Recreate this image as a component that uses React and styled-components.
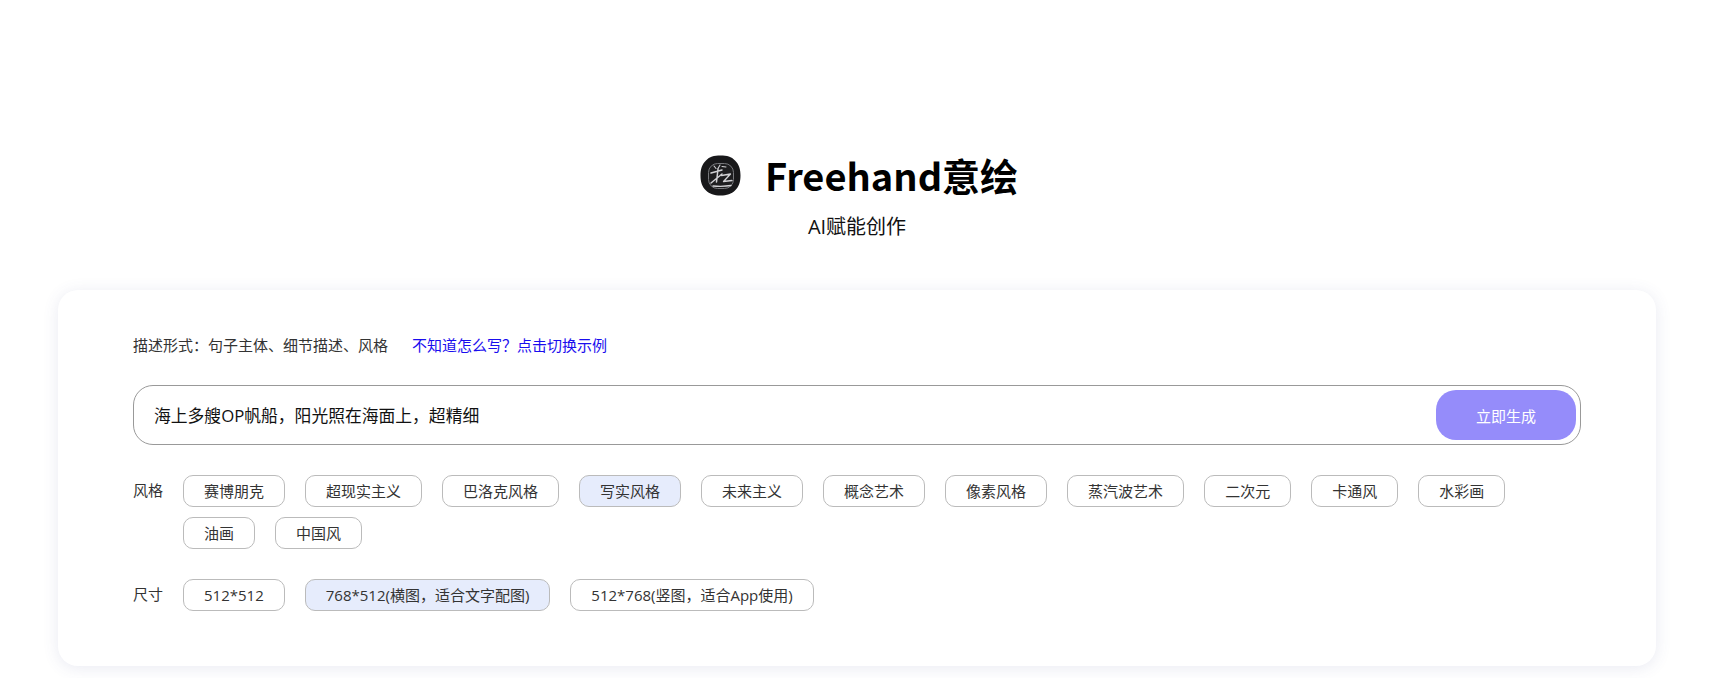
import React from 'react';
import styled, { createGlobalStyle } from 'styled-components';

const GlobalStyle = createGlobalStyle`
    html, body {
        margin: 0;
        background: #fff;
        font-family: "Open Sans", "Noto Sans CJK SC", sans-serif;
    }
`;

const Page = styled.div`
    height: 678px;
    overflow: hidden;
    padding: 155px 53px 0 58px;
    box-sizing: border-box;
`;

const Header = styled.header`
    display: flex;
    flex-direction: column;
    align-items: center;
`;

const TitleRow = styled.div`
    display: flex;
    align-items: center;
    gap: 24px;
    height: 41px;
    padding-left: 4px;
`;

const Title = styled.h1`
    margin: 0 0 3px;
    font-size: 38px;
    font-weight: 700;
    line-height: 41px;
    color: #000;
    font-family: "Noto Sans CJK SC", sans-serif;
`;

const Subtitle = styled.div`
    margin-top: 17px;
    font-size: 20px;
    line-height: 28px;
    color: #111;
`;

const Card = styled.section`
    margin-top: 49px;
    height: 376px;
    box-sizing: border-box;
    padding: 44px 75px 0;
    background: #fff;
    border-radius: 20px;
    box-shadow: 0 2px 16px rgba(70, 80, 150, 0.12);
`;

const HintRow = styled.div`
    display: flex;
    gap: 24px;
    font-size: 15px;
    line-height: 22px;
    color: #333;
`;

const HintLink = styled.a`
    color: #1a0dee;
    cursor: pointer;
`;

const SearchBar = styled.div`
    margin-top: 29px;
    height: 60px;
    box-sizing: border-box;
    display: flex;
    align-items: center;
    justify-content: space-between;
    padding: 0 4px 0 20px;
    border: 1px solid #999;
    border-radius: 20px;
`;

const PromptText = styled.div`
    font-size: 16.800px;
    color: #111;
`;

const GenerateButton = styled.button`
    width: 140px;
    height: 50px;
    border: none;
    border-radius: 20px;
    background: #958cfa;
    color: #fff;
    font-family: inherit;
    font-size: 15px;
`;

const OptionRow = styled.div`
    display: flex;
    margin-top: ${props => props.$top}px;
`;

const OptionLabel = styled.div`
    width: 50px;
    flex-shrink: 0;
    font-size: 15px;
    line-height: 30px;
    color: #333;
`;

const Tags = styled.div`
    display: flex;
    flex-wrap: wrap;
    gap: 10px 20px;
`;

const Tag = styled.div`
    height: 32px;
    box-sizing: border-box;
    padding: 0 20px;
    border: 1px solid #bbb;
    border-radius: 10px;
    font-size: 15px;
    line-height: 30px;
    color: #333;
    background: ${props => props.$active ? '#e6ecfc' : '#fff'};
`;

const styles = ['赛博朋克', '超现实主义', '巴洛克风格', '写实风格', '未来主义', '概念艺术', '像素风格', '蒸汽波艺术', '二次元', '卡通风', '水彩画', '油画', '中国风'];
const sizes = ['512*512', '768*512(横图，适合文字配图)', '512*768(竖图，适合App使用)'];

function Logo() {
    return (
        <svg width="41" height="41" viewBox="0 0 41 41">
            <path d="M20.500 .5C27 .5 31.500 1.500 35 5.500C39 9.500 40.500 14 40.500 20.500C40.500 27 39 31.500 35 35.500C31.500 39 27 40.500 20.500 40.500C14 40.500 9.500 39 6 35.500C2 31.500 .5 27 .5 20.500C.5 14 2 9.500 6 5.500C9.500 1.500 14 .5 20.500 .5Z" fill="#18181a" />
            <rect x="8.500" y="8.500" width="25" height="25" rx="9" fill="#1e1e20" stroke="#77787c" strokeWidth="1" />
            <g fill="none" stroke="#d2d2d5" strokeLinecap="round" strokeLinejoin="round">
                <path d="M14 11l2 2.500M20 10l-2 3.500M22 11.500l4 .5" strokeWidth="1.100" />
                <path d="M11 18l11-3M18 14l-1.500 13M22 19l-11 9" strokeWidth="1.500" />
                <path d="M21.500 20.500l9-1.500l-7 7.500l8.500-1M13 31c6 .5 12 .5 18-.5" strokeWidth="1.300" />
            </g>
        </svg>
    );
}

export default function App() {
    return (
        <Page>
            <GlobalStyle />
            <Header>
                <TitleRow>
                    <Logo />
                    <Title>Freehand意绘</Title>
                </TitleRow>
                <Subtitle>AI赋能创作</Subtitle>
            </Header>
            <Card>
                <HintRow>
                    <span>描述形式：句子主体、细节描述、风格</span>
                    <HintLink>不知道怎么写？点击切换示例</HintLink>
                </HintRow>
                <SearchBar>
                    <PromptText>海上多艘OP帆船，阳光照在海面上，超精细</PromptText>
                    <GenerateButton>立即生成</GenerateButton>
                </SearchBar>
                <OptionRow $top={30}>
                    <OptionLabel>风格</OptionLabel>
                    <Tags>
                        {styles.map(s => <Tag key={s} $active={s === '写实风格'}>{s}</Tag>)}
                    </Tags>
                </OptionRow>
                <OptionRow $top={30}>
                    <OptionLabel>尺寸</OptionLabel>
                    <Tags>
                        {sizes.map(s => <Tag key={s} $active={s.startsWith('768')}>{s}</Tag>)}
                    </Tags>
                </OptionRow>
            </Card>
        </Page>
    );
}
